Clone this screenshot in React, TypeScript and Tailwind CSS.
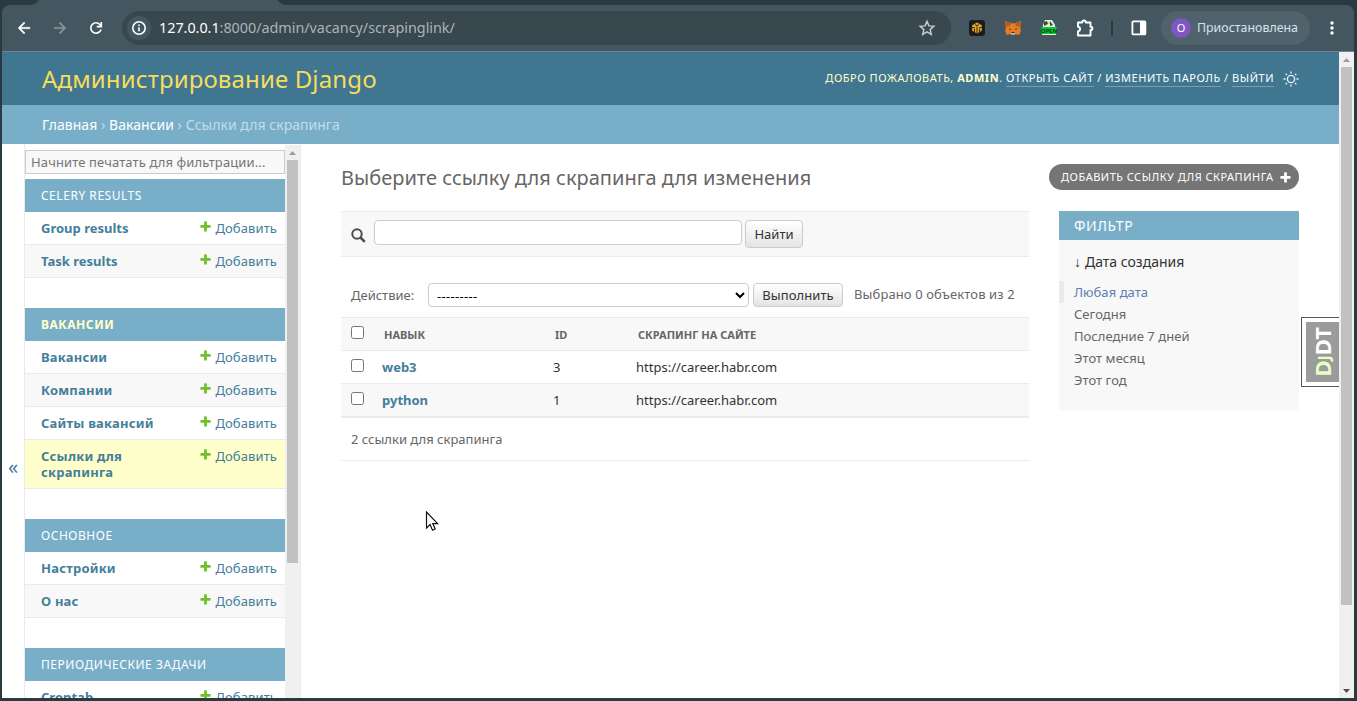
import React from "react";

const sections = [
  { title: "CELERY RESULTS", items: ["Group results", "Task results"] },
  { title: "ВАКАНСИИ", current: true, items: ["Вакансии", "Компании", "Сайты вакансий", "Ссылки для скрапинга"] },
  { title: "ОСНОВНОЕ", items: ["Настройки", "О нас"] },
  { title: "ПЕРИОДИЧЕСКИЕ ЗАДАЧИ", items: ["Crontab"] },
];

const rows = [
  { skill: "web3", id: 3, site: "https://career.habr.com" },
  { skill: "python", id: 1, site: "https://career.habr.com" },
];

const filters = ["Любая дата", "Сегодня", "Последние 7 дней", "Этот месяц", "Этот год"];

const PLUS =
  "M1600 796v192q0 40-28 68t-68 28h-416v416q0 40-28 68t-68 28h-192q-40 0-68-28t-28-68v-416h-416q-40 0-68-28t-28-68v-192q0-40 28-68t68-28h416v-416q0-40 28-68t68-28h192q40 0 68 28t28 68v416h416q40 0 68 28t28 68z";

function Plus({ className }: { className: string }) {
  return (
    <svg viewBox="0 0 1792 1792" className={className} fill="currentColor">
      <path d={PLUS} />
    </svg>
  );
}

function Toolbar() {
  return (
    <div className="relative h-[52px] shrink-0 bg-[#2b3940]">
      <div className="absolute left-[30px] top-0 h-2 w-[255px] bg-[#44565f]" />
      <div className="absolute left-0 top-[-9px] h-[14px] w-[40px] rounded-br-[10px] bg-[#2b3940]" />
      <div className="absolute left-[276px] top-[-9px] h-[14px] w-[40px] rounded-bl-[10px] bg-[#2b3940]" />
      <div className="relative ml-[2px] mr-[3px] flex h-full items-start pt-[5px]">
        <div className="flex h-[47px] w-full items-start rounded-t-[8px] border-b border-[#72848b] bg-[#44565f] pt-[6px]">
          <div className="flex h-[34px] w-[120px] items-center pl-[13px]">
            <svg viewBox="0 0 24 24" className="h-[18px] w-[18px] text-white" fill="currentColor" stroke="currentColor" strokeWidth=".5">
              <path d="M20 10.9H7.9l5.5-5.5L12 4l-8 8 8 8 1.4-1.4-5.5-5.5H20z" />
            </svg>
            <svg viewBox="0 0 24 24" className="ml-[18px] h-[18px] w-[18px] text-[#87949b]" fill="currentColor" stroke="currentColor" strokeWidth=".5">
              <path d="M4 10.9h12.1l-5.5-5.5L12 4l8 8-8 8-1.4-1.4 5.5-5.5H4z" />
            </svg>
            <svg viewBox="0 0 24 24" className="ml-[18px] h-[18px] w-[18px] text-white" fill="currentColor">
              <path d="M12 20q-3.35 0-5.675-2.325T4 12t2.325-5.675T12 4q1.725 0 3.3.712T18 6.75V4h2.2v7.2H13V9h4.1q-.8-1.35-2.15-2.1T12 6.15q-2.45 0-4.15 1.7T6.15 12t1.7 4.15T12 17.85q1.9 0 3.425-1.075T17.6 14h2.2q-.7 2.65-2.85 4.325T12 20" />
            </svg>
          </div>
          <div className="flex h-[34px] w-[829px] items-center rounded-full bg-[#39474e] pl-[5px] pr-[15px]">
            <span className="flex h-6 w-6 items-center justify-center rounded-full bg-[#44565f]">
              <svg viewBox="0 0 16 16" className="h-4 w-4" fill="none" stroke="#fff">
                <circle cx="8" cy="8" r="6.2" strokeWidth="1.6" />
                <path d="M8 7.2v4M8 4.4v1.6" strokeWidth="1.6" />
              </svg>
            </span>
            <span className="ml-2 text-[14.4px] tracking-[-0.04px] text-[#aab4b9]">
              <span className="text-white">127.0.0.1</span>:8000/admin/vacancy/scrapinglink/
            </span>
            <svg viewBox="0 0 24 24" className="ml-auto h-[18px] w-[18px]" fill="none" stroke="#c4ccd0" strokeWidth="2">
              <path d="M12 3.2l2.6 6 6.5.6-4.9 4.300 1.500 6.400L12 17.100 6.300 20.500l1.500-6.400L2.900 9.800l6.500-.6z" />
            </svg>
          </div>
          <div className="flex h-[34px] flex-1 items-center">
            <svg viewBox="0 0 16 16" className="ml-[18px] h-4 w-4">
              <rect width="16" height="16" rx="3" fill="#191c20" />
              <path d="M8 2.500l4.800 2.700v5.600L8 13.500l-4.800-2.700V5.200z" fill="#e5a81e" />
              <path d="M8 6.500v7M3.200 7.500h2.500M10.300 7.500h2.500M5.500 8.500v4M10.500 8.500v4M6 4.600l2 1 2-1" stroke="#191c20" strokeWidth=".9" fill="none" />
            </svg>
            <svg viewBox="0 0 16 16" className="ml-5 h-4 w-4">
              <path d="M0 .8l6 2.500h4l6-2.500-.7 7.200.5 3-1.500 4-3.800-1-1.500 1H7l-1.500-1-3.800 1-1.500-4L.8 8z" fill="#e97c23" />
              <path d="M0 .8L6 3.300 5 6 1 7zM16 .8l-6 2.500L11 6l4 1z" fill="#b85c24" />
              <path d="M4 8l2.500 1.500L4.500 10zM12 8L9.500 9.500l2 .5z" fill="#314a5c" />
              <path d="M6 12.500h4l.3 2H5.700z" fill="#c8b8a8" />
              <path d="M6.500 12h3v1h-3z" fill="#26323b" />
            </svg>
            <svg viewBox="0 0 16 16" className="ml-5 h-4 w-4">
              <path d="M4 0h7l3 5 1 10H1L2 5z" fill="#ecefe8" />
              <path d="M3 2l3-1 1 3-4 2zM9 1l3 4-3 1z" fill="#3c4a2b" />
              <path d="M7 2h2v2H7z" fill="#d8dc62" />
              <rect y="7" width="16" height="7" rx="1.500" fill="#08cc32" />
              <text x="8" y="12.700" textAnchor="middle" fontSize="6" fontWeight="bold" fill="#063d12">OPEN</text>
            </svg>
            <svg viewBox="0 0 18 18" className="ml-[19px] h-[18px] w-[18px]" fill="none" stroke="#fff" strokeWidth="1.900">
              <path d="M2 3.500h4.200c0-2.600 3.600-2.600 3.600 0h4.700v4.300c2.600 0 2.600 3.200 0 3.200v5.500H2v-4.200c2.800-.3 2.800-4.200 0-4.500z" strokeLinejoin="round" />
            </svg>
            <span className="ml-[17px] h-[15px] w-[2px] bg-[#2b3940]" />
            <svg viewBox="0 0 16 16" className="ml-[18px] h-4 w-4">
              <rect x="1.400" y="1.400" width="13" height="13" rx="1" fill="none" stroke="#fff" strokeWidth="1.800" />
              <path d="M9 1h6v14H9z" fill="#fff" />
            </svg>
            <div className="ml-[14px] flex h-[34px] w-[149px] items-center rounded-full bg-[#50626c] pl-[10px]">
              <span className="flex h-5 w-5 items-center justify-center rounded-full bg-[#7e57c2] text-[11px] text-white">O</span>
              <span className="ml-[6px] text-[12.4px] text-[#d2e4ee]">Приостановлена</span>
            </div>
            <svg viewBox="0 0 4 14" className="ml-[20px] h-[14px] w-1" fill="#fff">
              <circle cx="2" cy="2" r="1.700" />
              <circle cx="2" cy="7" r="1.700" />
              <circle cx="2" cy="12" r="1.700" />
            </svg>
          </div>
        </div>
      </div>
    </div>
  );
}

function Header() {
  return (
    <header className="flex h-[53px] shrink-0 items-center justify-between bg-[#417690] pl-10 pr-10 text-[#ffc]">
      <h1 className="text-[24px] font-normal leading-[36px] tracking-[0.14px] text-[#f5dd5d]">Администрирование Django</h1>
      <div className="flex items-center pb-[2px] text-[11px] leading-4 tracking-[0.54px]">
        <span className="whitespace-pre">ДОБРО ПОЖАЛОВАТЬ, <b>ADMIN</b>. </span>
        <a className="-mb-px border-b border-[#7b9fb1] text-white">ОТКРЫТЬ САЙТ</a>
        <span className="whitespace-pre"> / </span>
        <a className="-mb-px border-b border-[#7b9fb1] text-white">ИЗМЕНИТЬ ПАРОЛЬ</a>
        <span className="whitespace-pre"> / </span>
        <a className="-mb-px border-b border-[#7b9fb1] text-white">ВЫЙТИ</a>
        <svg viewBox="0 0 16 16" className="ml-[9px] mt-[3px] h-4 w-4" fill="none" stroke="#e8f3f7" strokeWidth="1.400">
          <circle cx="8" cy="8" r="3.600" />
          <path d="M8 .5v2M8 13.500v2M.5 8h2M13.500 8h2M2.700 2.700l1.200 1.200M12.100 12.100l1.200 1.200M2.700 13.300l1.200-1.200M12.100 3.900l1.200-1.200" />
        </svg>
      </div>
    </header>
  );
}

function Sidebar() {
  return (
    <nav className="flex w-[276px] shrink-0 border-r border-[#eaeaea]">
      <div className="w-[260px] overflow-hidden pt-[6px]">
        <input
          className="block h-6 w-full border border-[#ccc] bg-[#f8f8f8] px-[5px] text-[13px] tracking-[0.12px] placeholder:text-[#757575]"
          placeholder="Начните печатать для фильтрации..."
        />
        <div className="mt-[5px] flex flex-col gap-[30px]">
          {sections.map((s, n) => (
            <section key={s.title}>
              <h2
                className={
                  s.current
                    ? "h-[33px] bg-[#79aec8] pl-4 text-[12px] font-bold leading-[33px] tracking-[0.55px] text-[#ffc]"
                    : "h-[33px] bg-[#79aec8] pl-4 text-[12px] leading-[33px] tracking-[0.54px] text-white"
                }
              >
                {s.title}
              </h2>
              {s.items.map((item, i) => (
                <div
                  key={item}
                  className={
                    item === "Ссылки для скрапинга"
                      ? "flex items-start justify-between border-b border-[#eaeaea] bg-[#ffc] px-2 py-2 pl-4 text-[13px] leading-4 text-[#447e9b]"
                      : i % 2
                        ? "flex items-start justify-between border-b border-[#eaeaea] bg-[#f8f8f8] px-2 py-2 pl-4 text-[13px] leading-4 text-[#447e9b]"
                        : "flex items-start justify-between border-b border-[#eaeaea] bg-white px-2 py-2 pl-4 text-[13px] leading-4 text-[#447e9b]"
                  }
                >
                  <b className={n === 1 || n === 2 ? "max-w-[120px] font-bold tracking-[0.2px]" : "max-w-[120px] font-bold"}>
                    {item}
                  </b>
                  <a className="flex items-start tracking-[0.1px]">
                    <Plus className="mr-[3px] h-[13px] w-[13px] text-[#70bf2b]" />
                    Добавить
                  </a>
                </div>
              ))}
            </section>
          ))}
        </div>
      </div>
      <div className="mt-px flex w-[15px] flex-col items-center bg-[#f0f0f0]">
        <span className="flex h-[15px] items-center">
          <svg viewBox="0 0 7 4" className="h-1 w-[7px]" fill="#9c9c9c"><path d="M0 4L3.500 0 7 4z" /></svg>
        </span>
        <span className="ml-[-1px] h-[403px] w-[11px] bg-[#c1c1c1]" />
      </div>
    </nav>
  );
}

const BTN =
  "rounded-[4px] border border-[#ccc] bg-linear-to-b from-white to-[#e4e4e4] text-[13px] text-[#333]";

function Changelist() {
  return (
    <div className="w-[688px] text-[13px]">
      <div className="flex h-[46px] items-start border-y border-[#eaeaea] bg-[#f8f8f8] pl-[10px] pt-2">
        <svg viewBox="0 0 15 15" className="mt-2 h-[15px] w-[15px]" fill="none" stroke="#4d4d4d">
          <circle cx="6" cy="6" r="4.700" strokeWidth="2" />
          <path d="M9.500 9.500l4.300 4.300" strokeWidth="2.500" />
        </svg>
        <input className="ml-2 h-[25px] w-[368px] rounded-[4px] border border-[#ccc] bg-white" />
        <button className={BTN + " ml-[3px] h-7 w-[58px] pt-px"}>Найти</button>
      </div>
      <div className="mt-[26px] flex h-6 items-center pl-[10px] text-[#666]">
        <span className="relative top-px w-[77px]">Действие:</span>
        <select className="h-6 w-[321px] rounded-[4px] border border-[#ccc] bg-white pl-1 pt-px text-[13px] tracking-[0.3px] text-black">
          <option>---------</option>
        </select>
        <button className={BTN + " ml-1 h-6 w-[90px] pt-px tracking-[0.1px]"}>Выполнить</button>
        <span className="ml-[11px] tracking-[0.11px]">Выбрано 0 объектов из 2</span>
      </div>
      <div className="mt-[10px] border-b border-[#eaeaea]">
        <div className="grid h-[34px] grid-cols-[43px_171px_83px_1fr] border-y border-[#eaeaea] bg-[#f8f8f8] text-[11px] font-bold leading-[34px] text-[#666]">
          <input type="checkbox" className="ml-[10px] mt-2 h-[13px] w-[13px]" />
          <span>НАВЫК</span>
          <span>ID</span>
          <span>СКРАПИНГ НА САЙТЕ</span>
        </div>
        {rows.map((r, i) => (
          <div
            key={r.skill}
            className={
              i % 2
                ? "grid h-[33px] grid-cols-[41px_171px_83px_1fr] border-b border-[#eaeaea] bg-[#f8f8f8] leading-[32px] text-[#333]"
                : "grid h-[33px] grid-cols-[41px_171px_83px_1fr] border-b border-[#eaeaea] bg-white leading-[32px] text-[#333]"
            }
          >
            <input type="checkbox" className="ml-[10px] mt-2 h-[13px] w-[13px]" />
            <b className="font-bold text-[#447e9b]">{r.skill}</b>
            <span>{r.id}</span>
            <span>{r.site}</span>
          </div>
        ))}
      </div>
      <p className="h-[43px] border-b border-[#eaeaea] pl-[10px] leading-[43px] text-[#666]">2 ссылки для скрапинга</p>
    </div>
  );
}

function FilterPanel() {
  return (
    <aside className="h-[200px] w-[240px] bg-[#f8f8f8] text-[13px] text-[#666]">
      <h2 className="h-[29px] bg-[#79aec8] pl-[15px] text-[14px] leading-[29px] tracking-[0.6px] text-white">ФИЛЬТР</h2>
      <h3 className="mt-[11px] flex h-5 items-center pl-[15px] text-[14px] text-[#333]">
        <span className="w-[11px] text-[14px]">↓</span>
        <span>Дата создания</span>
      </h3>
      <ul className="mt-[10px]">
        {filters.map((f, i) => (
          <li
            key={f}
            className={
              i === 0
                ? "h-[22px] border-l-[5px] border-[#eaeaea] pl-[10px] leading-[22px] tracking-[0.05px] text-[#5b80b2]"
                : "h-[22px] pl-[15px] leading-[22px] tracking-[0.05px]"
            }
          >
            {f}
          </li>
        ))}
      </ul>
    </aside>
  );
}

export default function App() {
  return (
    <div className="relative flex h-[701px] w-[1357px] flex-col overflow-hidden bg-[#2b3940] font-['Noto_Sans','Open_Sans',sans-serif]">
      <Toolbar />
      <div className="ml-[2px] mr-[3px] flex h-[646px] bg-white">
        <div className="flex h-full w-[1337px] flex-col">
          <Header />
          <div className="h-[39px] shrink-0 bg-[#79aec8] pl-10 text-[14px] leading-[39px] tracking-[0.03px] text-[#c4dce8]">
            <span className="text-white">Главная</span> › <span className="text-white">Вакансии</span> › Ссылки для скрапинга
          </div>
          <div className="flex min-h-0 flex-1">
            <div className="flex w-[23px] shrink-0 items-center justify-center border-r border-[#eaeaea] pt-[92px] text-[20px] text-[#447e9b]">
              «
            </div>
            <Sidebar />
            <main className="flex-1 px-10 pt-5">
              <div className="flex h-[47px] items-start justify-between">
                <h1 className="text-[20px] font-normal leading-7 tracking-[0.02px] text-[#666]">Выберите ссылку для скрапинга для изменения</h1>
                <a className="flex h-[26px] w-[250px] items-center rounded-full bg-[#757575] pl-[12px] text-[11px] tracking-[0.5px] text-white">
                  ДОБАВИТЬ ССЫЛКУ ДЛЯ СКРАПИНГА
                  <Plus className="ml-[5px] h-[13px] w-[13px]" />
                </a>
              </div>
              <div className="flex items-start justify-between">
                <Changelist />
                <FilterPanel />
              </div>
            </main>
          </div>
        </div>
        <div className="flex w-[15px] flex-col items-center bg-[#f0f0f0]">
          <span className="flex h-[15px] items-center">
            <svg viewBox="0 0 7 4" className="h-1 w-[7px]" fill="#9c9c9c"><path d="M0 4L3.500 0 7 4z" /></svg>
          </span>
          <span className="h-[538px] w-[11px] bg-[#c1c1c1]" />
          <span className="mt-auto flex h-[15px] items-center">
            <svg viewBox="0 0 7 4" className="h-1 w-[7px]" fill="#505050"><path d="M0 0L3.500 4 7 0z" /></svg>
          </span>
        </div>
      </div>
      <div className="absolute left-[1301px] top-[317px] h-[70px] w-[38px] border border-r-0 border-[#555] bg-white pl-1 pt-1">
        <div className="flex h-[60px] w-[33px] items-center justify-center bg-[#9b9b9b]">
          <span className="rotate-180 text-[22px] font-bold leading-[33px] text-white [writing-mode:vertical-rl]">
            <span className="text-[#e6ffc7]">D</span>
            <span className="relative left-[-2px] text-[16px] text-[#e6ffc7]">J</span>DT
          </span>
        </div>
      </div>
      <svg viewBox="0 0 14 21" className="absolute left-[425px] top-[511px] h-[21px] w-[14px]">
        <path d="M1.500 1v16l3.600-3.400 2.400 5.600 2.700-1.200-2.400-5.400h4.800z" fill="#fff" stroke="#111" strokeWidth="1.200" />
      </svg>
    </div>
  );
}
